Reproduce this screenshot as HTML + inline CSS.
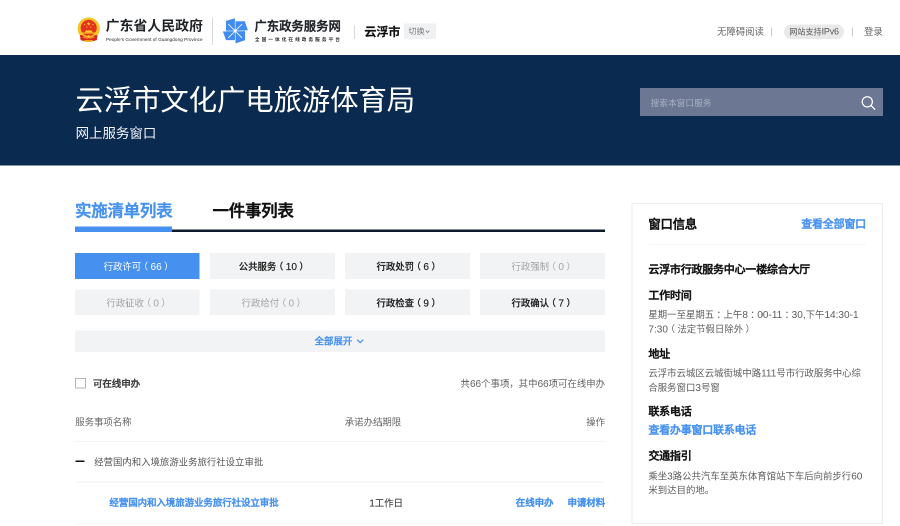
<!DOCTYPE html>
<html lang="zh-CN">
<head>
<meta charset="utf-8">
<title>云浮市文化广电旅游体育局 - 网上服务窗口</title>
<style>
html,body{margin:0;padding:0;background:#fff;}
body{width:900px;height:526px;overflow:hidden;position:relative;}
#stage{will-change:transform;position:absolute;left:0;top:0;width:1800px;height:1052px;transform:scale(.5);transform-origin:0 0;
  font-family:"Liberation Sans","Noto Sans CJK SC",sans-serif;color:#333;overflow:hidden;background:#fff;}
#stage *{box-sizing:border-box;}
.a{position:absolute;white-space:nowrap;margin:0;}
svg{display:block;}

.pr{display:inline-block;width:1em;text-align:center;font-feature-settings:"halt";}
.n{font-size:1.07em;}
/* ---------- top bar ---------- */
#emblem{left:154px;top:35.2px;width:46.8px;height:49.72px;}
#gov-cn{left:211.2px;top:32px;font-size:27.8px;line-height:40px;font-weight:700;color:#1f2326;letter-spacing:0px;}
#gov-en{left:212px;top:73.2px;font-size:9.2px;line-height:12px;color:#222;letter-spacing:0.15px;}
.vline{background:#d9d9d9;width:1.4px;}
#vl1{left:424.4px;top:35.2px;height:54.8px;}
#wheel{left:444px;top:35px;width:54px;height:54px;}
#zw-cn{left:508.8px;top:33.2px;font-size:24.7px;line-height:40px;font-weight:500;color:#202428;-webkit-text-stroke:0.8px #202428;}
#zw-sub{left:509.8px;top:72.2px;font-size:9.4px;line-height:14px;color:#2a2a2a;font-weight:700;letter-spacing:4.02px;}
#vl2{left:708.2px;top:50.8px;height:26.8px;}
#city{left:728.8px;top:43.6px;font-size:24.2px;line-height:40px;font-weight:700;color:#111;letter-spacing:-0.3px;-webkit-text-stroke:0.3px #111;}
#switch{left:808.4px;top:46.8px;width:63.2px;height:30.8px;background:#f0f1f3;border-radius:3px;}
#switch span{position:absolute;left:8.4px;top:0.6px;font-size:16.2px;line-height:30.8px;color:#7d7d7d;}
#switch svg{position:absolute;left:42px;top:13px;width:10.4px;height:6.6px;}
#nav1{left:1434px;top:44px;font-size:18.8px;line-height:40px;color:#666;}
#sep1{left:1542.4px;top:54.8px;height:18.4px;background:#ccc;}
#pill{left:1568px;top:48.6px;width:120px;height:29.6px;border-radius:14.8px;background:#e9e9e9;font-size:16.2px;line-height:29.6px;color:#555;text-align:center;}
#sep2{left:1704.4px;top:54.8px;height:18.4px;background:#ccc;}
#nav2{left:1728px;top:44px;font-size:18.8px;line-height:40px;color:#666;}

/* ---------- banner ---------- */
#banner{left:0;top:109.8px;width:1800px;height:221.6px;background:#0a2a4f;}
#title{left:151px;top:160.4px;font-size:56.9px;letter-spacing:-0.32px;line-height:80px;color:#fff;font-weight:400;}
#subtitle{left:151.2px;top:246.8px;font-size:26.9px;line-height:40px;color:#f2f4f8;font-weight:400;}
#search{left:1280px;top:175.6px;width:486px;height:56.6px;background:#6b7793;}
#search span{position:absolute;left:21.2px;top:2.6px;font-size:17.4px;line-height:56.6px;color:#a9b1c3;}
#search svg{position:absolute;left:441.6px;top:15.6px;width:30px;height:30px;}

/* ---------- tabs ---------- */
.tab{font-size:33px;line-height:48px;font-weight:500;top:398.2px;letter-spacing:-0.56px;-webkit-text-stroke:1.04px currentColor;}
#tab1{left:150px;color:#4691f0;}
#tab2{left:425px;color:#111;}
#tabline{left:150px;top:458.6px;width:1060px;height:5.2px;background:#0d1a2b;}
#tabbar{left:150px;top:452.6px;width:194px;height:11.2px;background:#4691f0;}

/* ---------- category buttons ---------- */
.cat{width:249.4px;height:51.4px;background:#f2f3f5;font-size:18.8px;line-height:54.2px;text-align:center;color:#1a1a1a;font-weight:500;-webkit-text-stroke:0.28px currentColor;}
.cat.off{color:#a3a3a3;font-weight:400;-webkit-text-stroke:0;}
.cat.on{background:#4691f0;color:#fff;font-weight:400;-webkit-text-stroke:0;}
.c1{left:150px}.c2{left:420.4px}.c3{left:690.2px}.c4{left:960.2px}
.r1{top:506.4px}.r2{top:578.8px}
#expand{left:150px;top:661.4px;width:1060px;height:42.8px;background:#f2f3f5;font-size:18.9px;line-height:42.8px;color:#4691f0;text-align:left;padding-left:479.2px;padding-top:0.6px;font-weight:500;-webkit-text-stroke:0.6px currentColor;}
#expand svg{position:absolute;left:563.4px;top:16.6px;width:14.8px;height:9.2px;}

/* ---------- list ---------- */
#chk{left:150.4px;top:756.2px;width:21.4px;height:21.2px;border:2px solid #b4b4b4;background:#fff;}
#chklabel{left:186px;top:748.4px;font-size:19px;line-height:40px;font-weight:500;color:#3c3c3c;letter-spacing:-0.2px;-webkit-text-stroke:0.6px currentColor;}
#count{right:590px;top:746.8px;font-size:18.8px;line-height:40px;color:#666;}
.th{top:825px;font-size:18.8px;line-height:40px;color:#666;}
#th1{left:150.4px}#th2{left:689.6px}#th3{right:590px}
.hl{left:150px;width:1060px;height:1.4px;background:#e9e9e9;}
#hl1{top:882px}
#hl2{top:963.2px;background:#f0f0f0;}
#hl3{top:1045.6px;background:#f0f0f0;}
#dash{left:150.8px;top:921.4px;width:18.4px;height:2.7px;background:#111;}
#grp{left:188.4px;top:905.2px;font-size:18.8px;line-height:40px;color:#555;}
#item{left:218.8px;top:986.2px;font-size:19px;line-height:40px;color:#4691f0;font-weight:500;letter-spacing:-0.2px;-webkit-text-stroke:0.76px currentColor;}
#days{left:738.4px;top:985.8px;font-size:18.8px;line-height:40px;color:#222;}
#op1{left:1031.6px;top:985.8px;font-size:19px;line-height:40px;color:#4691f0;font-weight:500;letter-spacing:-0.2px;-webkit-text-stroke:0.9px currentColor;}
#op2{right:589.8px;top:985.8px;font-size:19px;line-height:40px;color:#4691f0;font-weight:500;letter-spacing:-0.2px;-webkit-text-stroke:0.9px currentColor;}

/* ---------- side card ---------- */
#card{left:1263px;top:406.4px;width:502.6px;height:641.8px;border:2px solid #ebecec;background:#fff;}
#ctitle{left:1296.8px;top:428.6px;font-size:24.8px;line-height:40px;font-weight:500;color:#111;letter-spacing:-0.6px;-webkit-text-stroke:0.9px currentColor;}
#call{right:68.2px;top:428.4px;font-size:22.1px;line-height:40px;font-weight:500;color:#4691f0;letter-spacing:-0.54px;-webkit-text-stroke:0.84px currentColor;}
#cline{left:1296.8px;top:487.8px;width:434.6px;height:1.4px;background:#e9e9e9;}
.h{left:1296.8px;font-size:22.1px;line-height:32px;font-weight:500;color:#111;letter-spacing:-0.56px;-webkit-text-stroke:0.84px currentColor;}
.p{left:1296.8px;width:460px;font-size:18.8px;line-height:28.3px;color:#5c5c5c;white-space:normal;word-break:break-all;}
#h0{top:523.2px}
#h1{top:574.8px}
#p1{top:614.8px}
#h2{top:691.6px}
#p2{top:731.8px}
#h3{top:807.2px}
#lk{top:844.2px;color:#4691f0;}
#h4{top:896px}
#p4{top:937.8px}
</style>
</head>
<body>
<div id="stage">

<!-- top bar -->
<svg id="emblem" class="a" viewBox="0 0 48 51">
  <circle cx="24" cy="22.700" r="22.800" fill="#f5c426"/>
  <circle cx="24" cy="21.400" r="16.400" fill="#e5321f"/>
  <path d="M6 36.500 L13 35.500 Q24 44.500 35 35.500 L42 36.500 L40.600 46.300 Q24 52.500 7.400 46.300 Z" fill="#d9281a"/>
  <path d="M9.500 34 Q24 47.500 38.500 34" fill="none" stroke="#f5c426" stroke-width="2"/>
  <path d="M11.500 41 Q17.500 40.500 22 44 M36.500 41 Q30.500 40.500 26 44" fill="none" stroke="#f0b823" stroke-width="1.200"/>
  <circle cx="24" cy="39.400" r="3" fill="#f5c426"/>
  <path d="M15 46.400 H33 V49.600 Q24 51.200 15 49.600 Z" fill="#efb520"/>
  <polygon points="24,8.600 25,11.500 28.100,11.600 25.600,13.500 26.500,16.500 24,14.700 21.500,16.500 22.400,13.500 19.900,11.600 23,11.500" fill="#f6cb2c"/>
  <circle cx="15.400" cy="14.400" r="1.250" fill="#f4c42a"/><circle cx="32.600" cy="14.400" r="1.250" fill="#f4c42a"/>
  <circle cx="20" cy="19.600" r="1.200" fill="#f4c42a"/><circle cx="28" cy="19.600" r="1.200" fill="#f4c42a"/>
  <path d="M18 26.400 H30 V28.400 H31.500 V30.400 H16.500 V28.400 H18 Z" fill="#f8d030"/>
  <rect x="8.800" y="30.700" width="30.400" height="2.300" fill="#f5c426"/>
</svg>
<div id="gov-cn" class="a">广东省人民政府</div>
<div id="gov-en" class="a">People's Government of Guangdong Province</div>
<div id="vl1" class="a vline"></div>
<svg id="wheel" class="a" viewBox="0 0 54 54">
  <g fill="#408cf0">
    <polygon points="8,6.800 25.800,1.400 25.800,26 8,26"/>
    <polygon points="27,7.400 45.600,7.400 51.800,25.400 27,25.400"/>
    <polygon points="27,27.400 46.200,27.400 46.200,45.200 27,52"/>
    <polygon points="1.800,28 25.800,28 25.800,45.200 8,45.200"/>
  </g>
  <rect x="8" y="25.400" width="38.200" height="2.400" fill="#8dbcf7"/>
  <g stroke="#fff" stroke-width="1.500" stroke-linecap="round"><line x1="13" y1="13.600" x2="39.600" y2="40.400"/><line x1="39.600" y1="13.600" x2="13" y2="40.400"/></g>
  <rect x="23.600" y="23.800" width="5.600" height="5.600" fill="#fff"/>
</svg>
<div id="zw-cn" class="a">广东政务服务网</div>
<div id="zw-sub" class="a">全国一体化在线政务服务平台</div>
<div id="vl2" class="a vline"></div>
<div id="city" class="a">云浮市</div>
<div id="switch" class="a"><span>切换</span><svg viewBox="0 0 10 7"><path d="M1 1.200 L5 5.400 L9 1.200" fill="none" stroke="#808080" stroke-width="1.700"/></svg></div>
<div id="nav1" class="a">无障碍阅读</div>
<div id="sep1" class="a vline"></div>
<div id="pill" class="a">网站支持<span style="font-size:1.1em;letter-spacing:-.02em">IPv6</span></div>
<div id="sep2" class="a vline"></div>
<div id="nav2" class="a">登录</div>

<!-- banner -->
<div id="banner" class="a"></div>
<h1 id="title" class="a">云浮市文化广电旅游体育局</h1>
<div id="subtitle" class="a">网上服务窗口</div>
<div id="search" class="a"><span>搜索本窗口服务</span>
  <svg viewBox="0 0 30 30"><circle cx="12.600" cy="12.600" r="10.200" fill="none" stroke="#fff" stroke-width="2.500"/><line x1="20.200" y1="20.200" x2="27.600" y2="27.600" stroke="#fff" stroke-width="2.500" stroke-linecap="round"/></svg>
</div>

<!-- tabs -->
<div id="tab1" class="a tab">实施清单列表</div>
<div id="tab2" class="a tab">一件事列表</div>
<div id="tabline" class="a"></div>
<div id="tabbar" class="a"></div>

<!-- categories -->
<div class="a cat on c1 r1">行政许可<span class="pr">（</span><span class="n">66</span><span class="pr">）</span></div>
<div class="a cat c2 r1">公共服务<span class="pr">（</span><span class="n">10</span><span class="pr">）</span></div>
<div class="a cat c3 r1">行政处罚<span class="pr">（</span><span class="n">6</span><span class="pr">）</span></div>
<div class="a cat off c4 r1">行政强制<span class="pr">（</span><span class="n">0</span><span class="pr">）</span></div>
<div class="a cat off c1 r2">行政征收<span class="pr">（</span><span class="n">0</span><span class="pr">）</span></div>
<div class="a cat off c2 r2">行政给付<span class="pr">（</span><span class="n">0</span><span class="pr">）</span></div>
<div class="a cat c3 r2">行政检查<span class="pr">（</span><span class="n">9</span><span class="pr">）</span></div>
<div class="a cat c4 r2">行政确认<span class="pr">（</span><span class="n">7</span><span class="pr">）</span></div>
<div id="expand" class="a">全部展开<svg viewBox="0 0 16 10"><path d="M1.500 1.500 L8 8 L14.500 1.500" fill="none" stroke="#4691f0" stroke-width="2.600"/></svg></div>

<!-- list -->
<div id="chk" class="a"></div>
<div id="chklabel" class="a">可在线申办</div>
<div id="count" class="a">共<span class="n">66</span>个事项，其中<span class="n">66</span>项可在线申办</div>
<div id="th1" class="a th">服务事项名称</div>
<div id="th2" class="a th">承诺办结期限</div>
<div id="th3" class="a th">操作</div>
<div id="hl1" class="a hl"></div>
<div id="dash" class="a"></div>
<div id="grp" class="a">经营国内和入境旅游业务旅行社设立审批</div>
<div id="hl2" class="a hl"></div>
<div id="item" class="a">经营国内和入境旅游业务旅行社设立审批</div>
<div id="days" class="a"><span class="n">1</span>工作日</div>
<div id="op1" class="a">在线申办</div>
<div id="op2" class="a">申请材料</div>
<div id="hl3" class="a hl"></div>

<!-- side card -->
<div id="card" class="a"></div>
<div id="ctitle" class="a">窗口信息</div>
<div id="call" class="a">查看全部窗口</div>
<div id="cline" class="a"></div>
<div id="h0" class="a h">云浮市行政服务中心一楼综合大厅</div>
<div id="h1" class="a h">工作时间</div>
<div id="p1" class="a p">星期一至星期五<span class="pr">：</span>上午<span class="n">8</span><span class="pr">：</span><span class="n">00-11</span><span class="pr">：</span><span class="n">30,</span>下午<span class="n">14:30-1</span><br><span class="n">7:30</span><span class="pr">（</span>法定节假日除外<span class="pr">）</span></div>
<div id="h2" class="a h">地址</div>
<div id="p2" class="a p">云浮市云城区云城街城中路<span class="n">111</span>号市行政服务中心综<br>合服务窗口<span class="n">3</span>号窗</div>
<div id="h3" class="a h">联系电话</div>
<div id="lk" class="a h">查看办事窗口联系电话</div>
<div id="h4" class="a h">交通指引</div>
<div id="p4" class="a p">乘坐<span class="n">3</span>路公共汽车至英东体育馆站下车后向前步行<span class="n">60</span><br>米到达目的地。</div>

</div>
</body>
</html>
